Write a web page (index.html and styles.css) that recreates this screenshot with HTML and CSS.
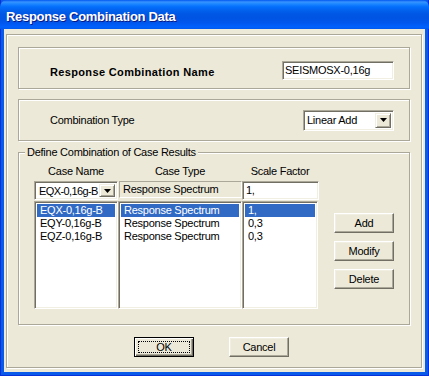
FILE: index.html
```html
<!DOCTYPE html>
<html>
<head>
<meta charset="utf-8">
<link rel="stylesheet" href="styles.css">
</head>
<body>
<div class="window">
  <div class="titlebar"><span class="title">Response Combination Data</span></div>
  <div class="client">
    <div class="frame">
      <div class="group g-name">
        <span class="label-bold">Response Combination Name</span>
        <div class="sunken name-box">SEISMOSX-0,16g</div>
      </div>
      <div class="group g-type">
        <span class="label">Combination Type</span>
        <div class="sunken select type-select">
          <span class="select-text">Linear Add</span>
          <span class="drop-btn"><svg width="7" height="4" viewBox="0 0 7 4"><path d="M0 0h7L3.5 4z" fill="#000"/></svg></span>
        </div>
      </div>
      <div class="group g-cases">
        <span class="legend">Define Combination of Case Results</span>
        <div class="cases">
          <div class="table">
            <div class="hdr">Case Name</div>
            <div class="hdr">Case Type</div>
            <div class="hdr">Scale Factor</div>
            <div class="sunken select case-select">
              <span class="select-text">EQX-0,16g-B</span>
              <span class="drop-btn"><svg width="7" height="4" viewBox="0 0 7 4"><path d="M0 0h7L3.5 4z" fill="#000"/></svg></span>
            </div>
            <div class="sunken type-field">Response Spectrum</div>
            <div class="sunken scale-box">1,</div>
            <div class="sunken list">
              <div class="row selected">EQX-0,16g-B</div>
              <div class="row">EQY-0,16g-B</div>
              <div class="row">EQZ-0,16g-B</div>
            </div>
            <div class="sunken list list-type">
              <div class="row selected">Response Spectrum</div>
              <div class="row">Response Spectrum</div>
              <div class="row">Response Spectrum</div>
            </div>
            <div class="sunken list">
              <div class="row selected">1,</div>
              <div class="row">0,3</div>
              <div class="row">0,3</div>
            </div>
          </div>
          <div class="side-buttons">
            <div class="btn">Add</div>
            <div class="btn">Modify</div>
            <div class="btn">Delete</div>
          </div>
        </div>
      </div>
      <div class="actions">
        <div class="btn btn-default"><span class="focus">OK</span></div>
        <div class="btn">Cancel</div>
      </div>
    </div>
  </div>
</div>
</body>
</html>
```
FILE: styles.css
```css
* { box-sizing: border-box; }
html, body { margin: 0; padding: 0; }
body {
  width: 429px;
  height: 376px;
  overflow: hidden;
  font-family: "Liberation Sans", Arial, sans-serif;
  font-size: 11px;
  letter-spacing: -0.25px;
  color: #000;
  background: #0054e3;
}
.window {
  width: 429px;
  height: 376px;
  display: flex;
  flex-direction: column;
  background: #0a5aea;
  box-shadow: inset 1px 0 #0831d9, inset -1px 0 #0831d9, inset 0 -1px #0831d9;
}
.titlebar {
  height: 29px;
  flex: none;
  padding: 3px 0 0 6px;
  display: flex;
  align-items: center;
  border-radius: 7px 7px 0 0;
  background: linear-gradient(to bottom, #0058ee 0, #3a93ff 2px, #288eff 3px, #127dff 5px, #036ffc 7px, #0262ee 10px, #0057e5 14px, #0054e3 18px, #0055eb 22px, #005bf5 25px, #0061fc 27px, #0058ee 29px);
}
.title {
  color: #fff;
  font-weight: bold;
  font-size: 13px;
  letter-spacing: -0.3px;
  text-shadow: 1px 1px #0a1883;
}
.client {
  flex: 1;
  margin: 0 4px 4px 4px;
  background: #ece9d8;
  display: flex;
  flex-direction: column;
}
.frame {
  flex: 1;
  margin: 5px 3px 4px 2px;
  border: 1px solid #aca899;
  box-shadow: inset 1px 1px #fff, 1px 1px #fff;
  padding: 12px 0 0 11px;
  display: flex;
  flex-direction: column;
}
.group {
  width: 392px;
  border: 1px solid #aca899;
  box-shadow: inset 1px 1px #fff, 1px 1px #fff;
  flex: none;
}
.sunken {
  border: 1px solid;
  border-color: #aca899 #fff #fff #aca899;
  box-shadow: inset 1px 1px #716f64, inset -1px -1px #f1efe2;
  background: #fff;
}
.g-name {
  height: 42px;
  display: flex;
  align-items: center;
  padding: 5px 15px 0 31px;
}
.label-bold {
  font-weight: bold;
  letter-spacing: 0.35px;
  margin-top: 3px;
}
.name-box {
  margin-left: auto;
  width: 112px;
  height: 19px;
  padding: 2px 0 0 2px;
  line-height: 13px;
}
.g-type {
  margin-top: 10px;
  height: 42px;
  display: flex;
  align-items: center;
  padding: 0 15px 0 31px;
}
.select {
  display: flex;
  align-items: stretch;
  padding: 2px;
}
.select-text {
  flex: 1;
  min-width: 0;
  display: flex;
  align-items: center;
  padding-left: 1px;
  white-space: nowrap;
  overflow: hidden;
}
.drop-btn {
  width: 16px;
  flex: none;
  display: flex;
  align-items: center;
  justify-content: center;
  background: #ece9d8;
  border: 1px solid;
  border-color: #f1efe2 #716f64 #716f64 #f1efe2;
  box-shadow: inset 1px 1px #fff, inset -1px -1px #aca899;
}
.type-select {
  margin-left: auto;
  width: 91px;
  height: 21px;
}
.g-cases {
  margin-top: 11px;
  height: 173px;
  display: flex;
  flex-direction: column;
  align-items: flex-start;
}
.legend {
  margin: -7px 0 0 6px;
  padding: 0 2px;
  line-height: 13px;
  background: #ece9d8;
}
.cases {
  display: flex;
  margin-top: 6px;
  padding-left: 15px;
}
.table {
  display: grid;
  grid-template-columns: 84px 124px 76px;
}
.hdr {
  text-align: center;
  line-height: 13px;
  margin-bottom: 3px;
}
.case-select {
  height: 19px;
}
.case-select .select-text {
  padding-left: 2px;
  letter-spacing: -0.6px;
}
.type-field {
  height: 17px;
  margin-left: 1px;
  background: #ece9d8;
  padding: 1px 0 0 3px;
  line-height: 13px;
  border-color: #aca899 #fff #fff #aca899;
  box-shadow: none;
}
.scale-box {
  height: 19px;
  width: 77px;
  padding: 2px 0 0 3px;
  line-height: 13px;
}
.list {
  height: 108px;
  margin-top: 1px;
  padding: 2px;
}
.row {
  height: 13px;
  line-height: 13px;
  padding-left: 3px;
  white-space: nowrap;
}
.row.selected {
  background: #316ac5;
  color: #fff;
}
.side-buttons {
  display: flex;
  flex-direction: column;
  gap: 8px;
  margin: 48px 0 0 16px;
}
.btn {
  width: 60px;
  height: 20px;
  display: flex;
  align-items: center;
  justify-content: center;
  background: #ece9d8;
  border: 1px solid;
  border-color: #fff #716f64 #716f64 #fff;
  box-shadow: inset -1px -1px #aca899, inset 1px 1px #f1efe2;
  line-height: 13px;
}
.actions {
  display: flex;
  justify-content: center;
  gap: 35px;
  margin-top: 12px;
  padding-right: 16px;
}
.btn-default {
  border: 1px solid #000;
  box-shadow: inset 1px 1px #fff, inset -1px -1px #716f64, inset -2px -2px #aca899;
  padding: 3px;
  align-items: stretch;
}
.focus {
  flex: 1;
  border: 1px dotted #000;
  display: flex;
  align-items: center;
  justify-content: center;
  line-height: 10px;
}
```
